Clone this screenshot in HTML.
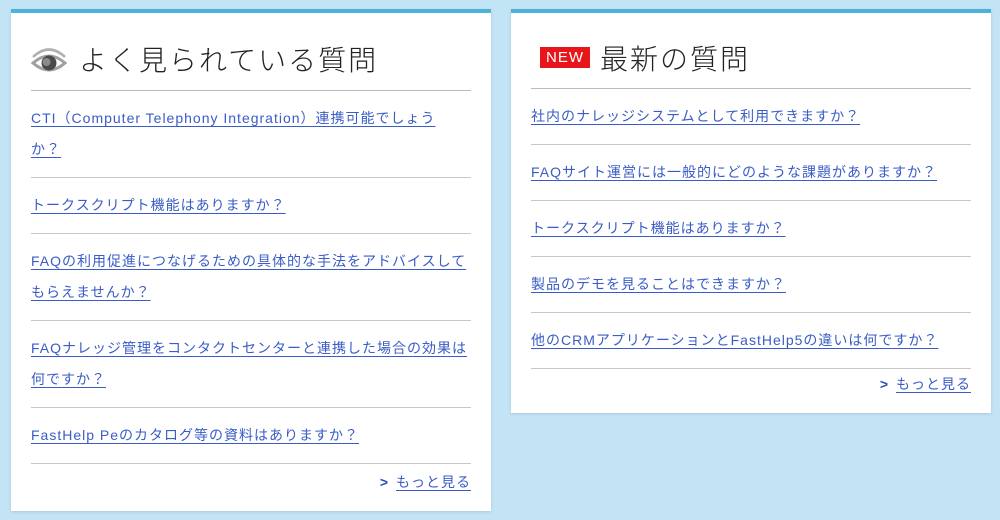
<!DOCTYPE html>
<html><head><meta charset="utf-8"><style>
*{margin:0;padding:0;box-sizing:border-box}
body{width:1000px;height:520px;background:#c2e4f5;font-family:"Liberation Sans","Noto Sans CJK JP",sans-serif;position:relative;overflow:hidden}
.card{position:absolute;top:9px;width:480px;background:#fff;border-top:4px solid #4bb3da;padding:0 20px;box-shadow:0 1px 3px rgba(0,0,0,.12)}
.l{left:11px;height:502px}
.r{left:511px;height:404px}
h2{font-weight:300;font-size:28px;letter-spacing:2px;color:#222;height:78px;display:flex;align-items:center;padding-top:14px;border-bottom:1px solid #bbb}
.r h2{height:76px;padding-left:9px}
.new{background:#e8151b;color:#fff;font-size:15px;letter-spacing:1px;font-weight:400;padding:1px 6px;margin-right:10px;line-height:19px}
ul{list-style:none}
li{border-bottom:1px solid #c8c8c8;padding:12px 0 12px}
a{color:#3a5cc6;font-size:14px;letter-spacing:1px;line-height:31px;text-decoration:underline;text-underline-offset:3px}
.more{text-align:right;padding-top:3px;font-size:14px}
.more span{color:#2a4cb6;font-weight:bold;margin-right:8px;font-size:14px}
</style></head><body>
<div class="card l">
<h2><svg width="36" height="28" viewBox="0 0 36 28" style="margin-right:12px"><path d="M2 12 Q18 -3 34 12" fill="none" stroke="#b0b0b0" stroke-width="2.5"/><path d="M2 18 Q18 4 34 18 Q18 32 2 18Z" fill="none" stroke="#a0a0a0" stroke-width="3"/><circle cx="18" cy="18" r="7.5" fill="#4a4a4a"/><circle cx="15.5" cy="17" r="4" fill="#8a8a8a"/></svg>よく見られている質問</h2>
<ul>
<li><a>CTI（Computer Telephony Integration）連携可能でしょう<br>か？</a></li>
<li><a>トークスクリプト機能はありますか？</a></li>
<li><a>FAQの利用促進につなげるための具体的な手法をアドバイスしてもらえませんか？</a></li>
<li><a>FAQナレッジ管理をコンタクトセンターと連携した場合の効果は何ですか？</a></li>
<li><a>FastHelp Peのカタログ等の資料はありますか？</a></li>
</ul>
<div class="more"><span>&gt;</span><a>もっと見る</a></div>
</div>
<div class="card r">
<h2><span class="new">NEW</span>最新の質問</h2>
<ul>
<li><a>社内のナレッジシステムとして利用できますか？</a></li>
<li><a>FAQサイト運営には一般的にどのような課題がありますか？</a></li>
<li><a>トークスクリプト機能はありますか？</a></li>
<li><a>製品のデモを見ることはできますか？</a></li>
<li><a>他のCRMアプリケーションとFastHelp5の違いは何ですか？</a></li>
</ul>
<div class="more" style="padding-top:0"><span>&gt;</span><a>もっと見る</a></div>
</div>
</body></html>
